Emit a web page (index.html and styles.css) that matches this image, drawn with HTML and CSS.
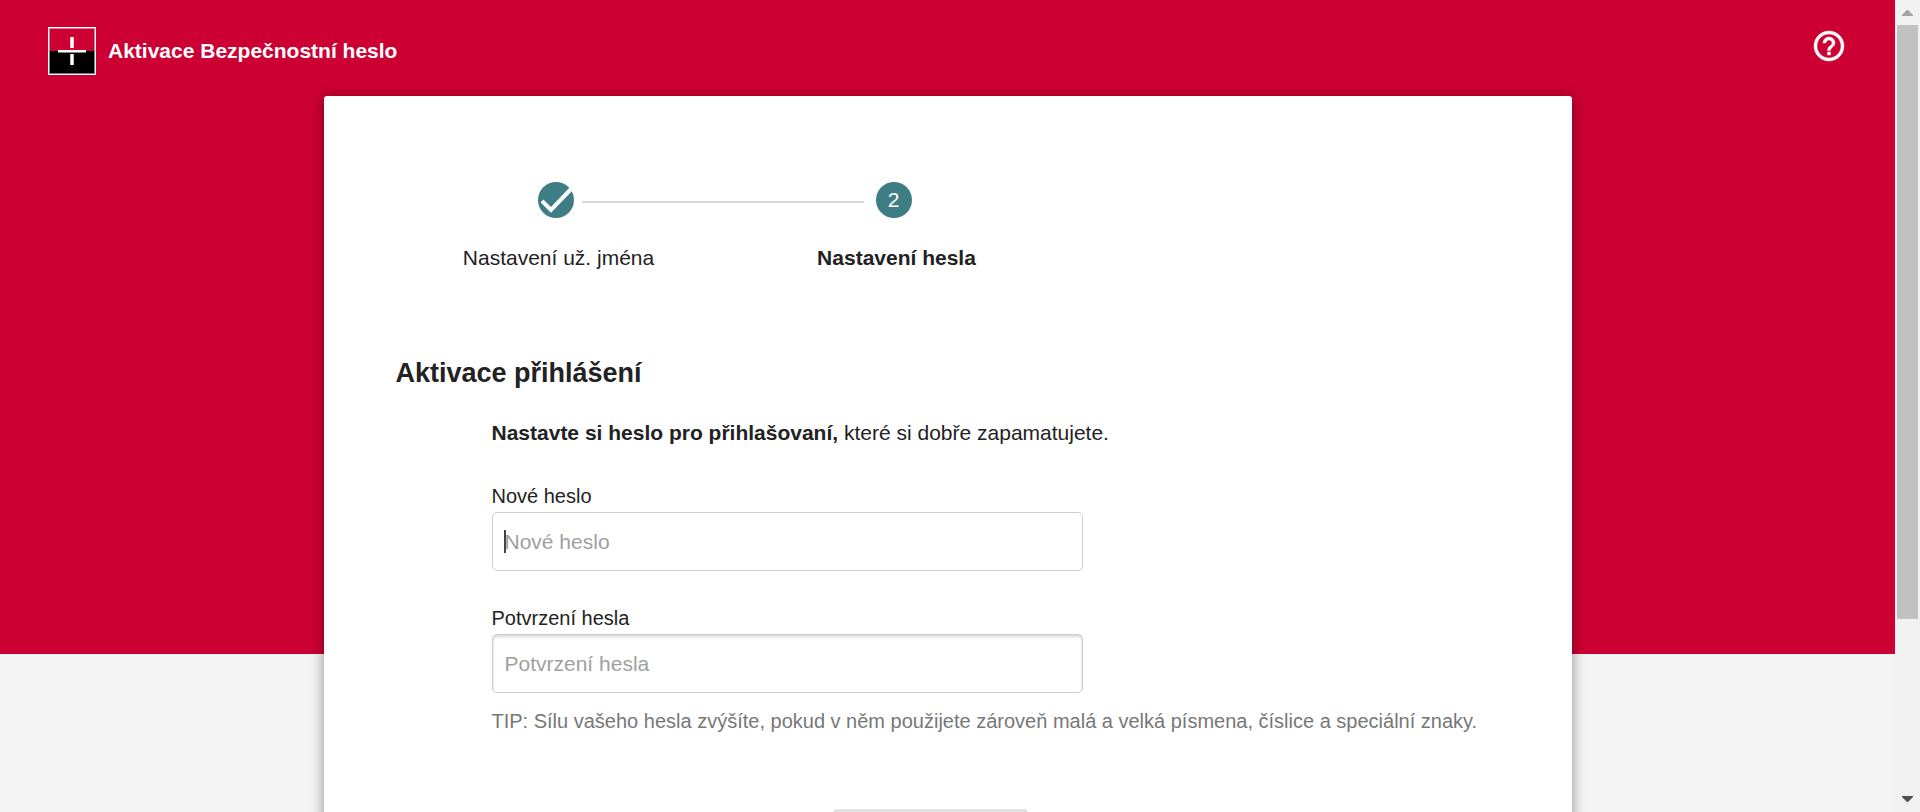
FILE: index.html
```html
<!DOCTYPE html>
<html lang="cs">
<head>
<meta charset="utf-8">
<title>Aktivace Bezpečnostní heslo</title>
<meta name="viewport" content="width=device-width, initial-scale=1">
<link rel="stylesheet" href="styles.css">
</head>
<body>
<div class="page">
  <header class="topbar">
    <div class="brand">
      <svg class="logo" viewBox="0 0 48 48" aria-hidden="true">
        <rect width="48" height="48" fill="#fff"/>
        <rect x="1" y="1" width="46" height="23" fill="#e58099"/>
        <rect x="1" y="24" width="46" height="23" fill="#808080"/>
        <rect x="2" y="2" width="44" height="22" fill="#cc0033"/>
        <rect x="2" y="24" width="44" height="22" fill="#000"/>
        <rect x="22" y="10" width="4" height="11" fill="#f2bfcc"/>
        <rect x="23" y="10" width="2" height="11" fill="#fff"/>
        <rect x="22" y="27" width="4" height="11" fill="#bfbfbf"/>
        <rect x="23" y="27" width="2" height="11" fill="#fff"/>
        <rect x="10" y="23" width="28" height="2" fill="#fff"/>
        <rect x="10" y="25" width="28" height="1" fill="#808080"/>
      </svg>
      <span class="brand-name">Aktivace Bezpečnostní heslo</span>
    </div>
    <button class="help" type="button" aria-label="Nápověda">
      <svg viewBox="0 0 24 24" aria-hidden="true"><path fill="#fff" stroke="#fff" stroke-width=".3" d="M11 18h2v-2h-2v2zm1-16C6.480 2 2 6.480 2 12s4.480 10 10 10 10-4.480 10-10S17.520 2 12 2zm0 18c-4.410 0-8-3.590-8-8s3.590-8 8-8 8 3.590 8 8-3.590 8-8 8zm0-14c-2.210 0-4 1.790-4 4h2c0-1.100.9-2 2-2s2 .9 2 2c0 2-3 1.750-3 5h2c0-2.250 3-2.500 3-5 0-2.210-1.790-4-4-4z"/></svg>
    </button>
  </header>
  <main class="card">
    <ol class="steps">
      <li class="step">
        <span class="marker"><svg viewBox="0 0 36 36" aria-hidden="true"><path d="M4 19l9 9L33 7" fill="none" stroke="#fff" stroke-width="4"/></svg></span>
        <span class="step-label">Nastavení už. jména</span>
      </li>
      <li class="step current" aria-current="step">
        <span class="marker">2</span>
        <span class="step-label">Nastavení hesla</span>
      </li>
    </ol>
    <h1 class="heading">Aktivace přihlášení</h1>
    <form class="form">
      <p class="intro"><strong>Nastavte si heslo pro přihlašovaní,</strong> které si dobře zapamatujete.</p>
      <div class="field">
        <label for="new-password">Nové heslo</label>
        <div class="control">
          <input class="focused" id="new-password" type="password" placeholder="Nové heslo">
          <span class="caret"></span>
        </div>
      </div>
      <div class="field">
        <label for="confirm-password">Potvrzení hesla</label>
        <div class="control">
          <input id="confirm-password" type="password" placeholder="Potvrzení hesla" aria-describedby="tip">
        </div>
      </div>
      <p class="tip" id="tip">TIP: Sílu vašeho hesla zvýšíte, pokud v něm použijete zároveň malá a velká písmena, číslice a speciální znaky.</p>
    </form>
    <div class="actions"><button class="submit" type="submit" aria-label="Pokračovat" disabled></button></div>
  </main>
</div>
<div class="scrollbar" aria-hidden="true">
  <svg class="arrow" viewBox="0 0 25 25"><path d="M7 16h11v-1l-5-5h-1l-5 5z" fill="#a3a3a3"/></svg>
  <div class="track"><div class="thumb"></div></div>
  <svg class="arrow" viewBox="0 0 25 25"><path d="M7 9h11v1l-5 5h-1l-5-5z" fill="#505050"/></svg>
</div>
</body>
</html>
```

FILE: styles.css
```css
* {
  box-sizing: border-box;
}

body {
  display: flex;
  height: 100vh;
  margin: 0;
  overflow: hidden;
  background: #f4f4f4;
  color: #222;
  font: 21px/28px "Liberation Sans", Arial, sans-serif;
}

.page {
  flex: 1;
  min-width: 0;
  height: 100%;
  overflow: hidden;
  background: linear-gradient(#cc0033 654px, #f4f4f4 654px);
}

.topbar {
  display: flex;
  align-items: flex-start;
  justify-content: space-between;
  padding: 27px 48px 21px;
}

.brand {
  display: flex;
  align-items: center;
  gap: 12px;
  color: #fff;
  font-weight: bold;
}

.logo {
  display: block;
  width: 48px;
  height: 48px;
}

.help {
  height: 38px;
  padding: 1px 0;
  border: 0;
  background: none;
}

.help svg,
.marker svg {
  display: block;
  width: 36px;
  height: 36px;
}

.card {
  width: 1248px;
  max-width: 100%;
  margin: 0 auto;
  padding: 86px 72px 72px;
  border-radius: 3px;
  background: #fff;
  box-shadow: 0 2px 14px rgba(0, 0, 0, 0.4);
}

.steps {
  display: flex;
  margin: 0 0 0 -9px;
  padding: 0;
  list-style: none;
}

.step {
  position: relative;
  display: flex;
  flex-direction: column;
  align-items: center;
  gap: 26px;
  width: 338px;
}

.step:not(:last-child)::after {
  content: "";
  position: absolute;
  top: 19px;
  left: calc(50% + 26px);
  width: calc(100% - 56px);
  height: 2px;
  background: #d8d8d8;
}

.marker {
  width: 36px;
  height: 36px;
  border-radius: 50%;
  background: #3f7d85;
  color: #fff;
  line-height: 36px;
  text-align: center;
}

.step-label {
  padding-left: 6px;
}

.current .step-label {
  font-weight: bold;
}

.heading {
  margin: 83px 0 0;
  font-size: 27px;
  line-height: 36px;
}

.form {
  padding-left: 96px;
}

.intro {
  margin: 28px 0 35px;
}

.field {
  margin-bottom: 33px;
}

label {
  display: block;
  padding-bottom: 2px;
  font-size: 20px;
}

.control {
  position: relative;
  max-width: 591px;
}

input {
  display: block;
  width: 100%;
  height: 59px;
  padding: 0 12px;
  border: 1px solid #ccc;
  border-radius: 5px;
  background: #fff;
  box-shadow: inset 0 2px 3px rgba(0, 0, 0, 0.16);
  color: #222;
  font: inherit;
}

input::placeholder {
  color: #a0a0a0;
  opacity: 1;
}

.focused {
  box-shadow: none;
}

.caret {
  position: absolute;
  top: 18px;
  left: 12px;
  width: 2px;
  height: 23px;
  background: #444;
}

.tip {
  margin: -19px 0 0;
  color: #777;
  font-size: 20px;
}

.actions {
  display: flex;
  justify-content: center;
  padding-top: 74px;
}

.submit {
  width: 195px;
  height: 60px;
  margin-left: -34px;
  border: 0;
  border-radius: 4px;
  background: #e3e3e3;
}

.scrollbar {
  display: flex;
  flex-direction: column;
  width: 25px;
  background: #f1f1f1;
}

.arrow {
  display: block;
  height: 25px;
}

.track {
  flex: 1;
  padding: 0 2px;
}

.thumb {
  height: 78%;
  background: #c1c1c1;
}
```
